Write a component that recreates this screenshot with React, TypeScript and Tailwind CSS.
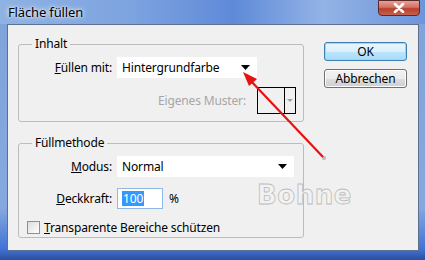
import React from 'react';

function Arrow() {
  return (
    <svg className="absolute left-0 top-0 pointer-events-none" width="425" height="260" viewBox="0 0 425 260">
      <circle cx="324" cy="158" r="2" fill="#b8b8c0" />
      <line x1="323" y1="157" x2="249" y2="79" stroke="#e81010" strokeWidth="2.2" />
      <polygon points="243,72 257,79 249,86" fill="#e81010" />
    </svg>
  );
}

export default function App() {
  return (
    <div className="relative w-[425px] h-[260px] overflow-hidden flex flex-col bg-[linear-gradient(180deg,#7fa3dc_0%,#86a8df_80%,#3f72d4_96%,#2a4f9c_100%)] font-['Noto_Sans',sans-serif] text-[12px] tracking-[-0.15px] text-black">
      {/* title bar */}
      <div className="h-[24px] flex justify-between bg-[linear-gradient(90deg,#8fb2e3_0%,#7ea4e0_30%,#5f8ad8_55%,#93b3e6_76%,#6d95da_100%)]">
        <div className="pl-[8px] pt-[3px] text-[13px] leading-[18px] [text-shadow:0_0_6px_#ffffff,0_0_3px_#ffffff]">Fläche füllen</div>
        <div className="mr-[5px] w-[42px] h-[16px] rounded-b-[4px] border border-[#5a2a2a] bg-[linear-gradient(180deg,#e6a29a_0%,#d4705f_45%,#b8402e_55%,#c8604e_100%)] flex items-center justify-center">
          <svg width="12" height="10" viewBox="0 0 12 10">
            <path d="M2 1 L10 9 M10 1 L2 9" stroke="#ffffff" strokeWidth="2.6" strokeLinecap="round" />
          </svg>
        </div>
      </div>

      {/* client area */}
      <div className="ml-[7px] mr-[6px] h-[227px] border border-[#5d7090] bg-[#f0f0f0] flex">
        <div className="ml-[10px] pt-[11px] flex flex-col gap-[13px] w-[286px]">
          <fieldset className="border border-[#bcbcbc] rounded-[3px] h-[86px] pb-[7px]">
            <legend className="ml-[13px] px-[3px] leading-[16px]">Inhalt</legend>
            <div className="flex items-center mt-[5px] h-[21px]">
              <div className="w-[96px] text-right pr-[3px]"><u>F</u>üllen mit:</div>
              <div className="ml-[2px] w-[140px] h-[21px] bg-white flex items-center justify-between pl-[5px] pr-[7px]">
                <span>Hintergrundfarbe</span>
                <svg width="9" height="5" viewBox="0 0 9 5"><polygon points="0,0 9,0 4.5,5" fill="#000" /></svg>
              </div>
            </div>
            <div className="flex items-center justify-end mt-[9px] pr-[7px] h-[27px]">
              <span className="text-[#a6a6a6] mr-[11px]">Eigenes Muster:</span>
              <div className="w-[39px] h-[27px] border border-black flex">
                <div className="w-[27px] border-r border-black" />
                <div className="flex-1 flex items-center justify-center">
                  <svg width="6" height="3" viewBox="0 0 6 3"><polygon points="0,0 6,0 3,3" fill="#a0a0a0" /></svg>
                </div>
              </div>
            </div>
          </fieldset>

          <fieldset className="border border-[#bcbcbc] rounded-[3px] h-[103px]">
            <legend className="ml-[13px] px-[3px] leading-[16px]">Füllmethode</legend>
            <div className="flex items-center mt-[5px] h-[21px]">
              <div className="w-[96px] text-right pr-[3px]"><u>M</u>odus:</div>
              <div className="ml-[2px] w-[177px] h-[21px] bg-white flex items-center justify-between pl-[5px] pr-[7px]">
                <span>Normal</span>
                <svg width="9" height="5" viewBox="0 0 9 5"><polygon points="0,0 9,0 4.5,5" fill="#000" /></svg>
              </div>
            </div>
            <div className="flex items-center mt-[11px] h-[21px]">
              <div className="w-[96px] text-right pr-[3px]"><u>D</u>eckkraft:</div>
              <div className="ml-[2px] w-[46px] h-[21px] bg-white border border-[#8fb8e6] flex items-center pl-[4px]">
                <span className="bg-[#3399ff] text-white leading-[15px] px-[1px]">100</span>
              </div>
              <span className="ml-[6px]">%</span>
            </div>
            <div className="flex items-center mt-[12px] h-[13px] pl-[8px]">
              <div className="w-[13px] h-[13px] border border-[#8e8f8f] bg-[linear-gradient(135deg,#dcdcdc,#ffffff)]" />
              <span className="ml-[4px]"><u>T</u>ransparente Bereiche schützen</span>
            </div>
          </fieldset>
        </div>

        <div className="ml-[20px] pt-[17px] flex flex-col gap-[8px] w-[83px]">
          <button className="h-[19px] rounded-[3px] border border-[#3c7fb1] bg-[linear-gradient(180deg,#eaf6fd_0%,#d9f0fc_50%,#bee6fd_52%,#a7d9f5_100%)] shadow-[inset_0_0_0_1px_#94ddf8] text-[12px] leading-[16px]">
            OK
          </button>
          <button className="h-[19px] rounded-[3px] border border-[#707070] bg-[linear-gradient(180deg,#f2f2f2_0%,#ebebeb_50%,#dddddd_52%,#cfcfcf_100%)] shadow-[inset_0_0_0_1px_#fcfcfc] text-[12px] leading-[16px]">
            Abbrechen
          </button>
        </div>
      </div>

      <div className="absolute left-[257px] top-[180px] text-[26px] leading-[30px] font-bold font-['DejaVu_Sans',sans-serif] text-[#f4f4f4]/70 [-webkit-text-stroke:0.8px_#bcbcbc] tracking-[0.5px]">
        Bohne
      </div>
      <Arrow />
    </div>
  );
}
